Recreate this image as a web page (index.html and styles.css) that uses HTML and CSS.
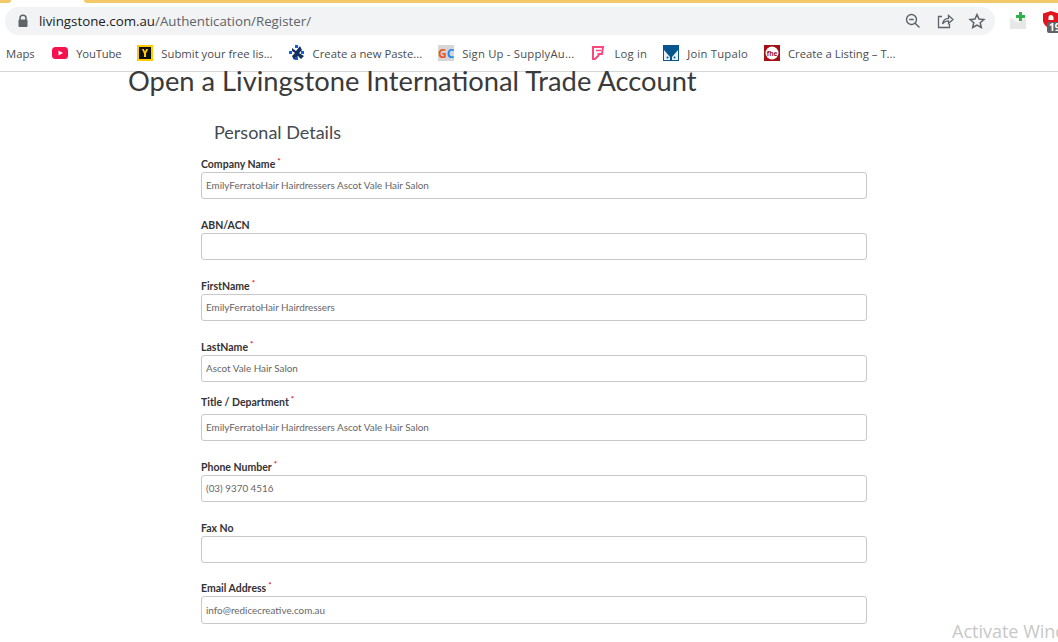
FILE: index.html
```html
<!DOCTYPE html>
<html lang="en">
<head>
<meta charset="utf-8">
<title>Open a Livingstone International Trade Account</title>
<link rel="stylesheet" href="styles.css">
</head>
<body>
<header class="chrome">
  <div class="tabstrip"><div class="tabstub"></div><div class="tabgap"></div><div class="tabfill"></div></div>
  <div class="toolbar">
    <div class="omnibox">
      <svg class="lock" width="12" height="14" viewBox="0 0 12 14"><path d="M3 6V4.200a3 3 0 0 1 6 0V6" fill="none" stroke="#5f6368" stroke-width="1.500"/><rect x="1.500" y="5.500" width="9" height="7.500" rx="1" fill="#5f6368"/></svg>
      <div class="url"><span class="host">livingstone.com.au</span>/Authentication/Register/</div>
      <svg class="omni-icon" width="18" height="18" viewBox="0 0 18 18" fill="none" stroke="#5f6368" stroke-width="1.400"><circle cx="7.500" cy="7.500" r="5"/><path d="M11.200 11.200 15.500 15.500M5.200 7.500h4.600"/></svg>
      <svg class="omni-icon" width="18" height="18" viewBox="0 0 18 18" fill="none" stroke="#5f6368" stroke-width="1.300"><path d="M6 4.500H2.500v11h11V12"/><path d="M6.500 12c.6-3.500 3-5.600 6-5.600V3.500L17 7.500l-4.500 4V8.800c-2.500 0-4.500.8-6 3.200z"/></svg>
      <svg class="omni-icon" width="18" height="18" viewBox="0 0 18 18" fill="none" stroke="#5f6368" stroke-width="1.500"><path d="M9 2.500l2 4.500 4.900.5-3.700 3.200 1.100 4.800L9 13l-4.300 2.500 1.100-4.800L2.100 7.500 7 7z"/></svg>
    </div>
    <div class="extensions">
      <svg width="18" height="18" viewBox="0 0 18 18"><rect x="0" y="6" width="16" height="11" fill="#e6e8e7"/><path d="M0 6h16l-8 5z" fill="#f5f6f5"/><path d="M9 0h3v3h3v3h-3v3H9V6H6V3h3z" fill="#2fb24a"/></svg>
      <div class="shield-wrap">
        <svg width="18" height="18" viewBox="0 0 18 18"><path d="M1 2.500 9 0l8 2.500v7c0 4-4 7-8 8.500-4-1.500-8-4.500-8-8.500z" fill="#e0161e"/><path d="M6.500 9V6.500a2.500 2.500 0 0 1 5 0V9z" fill="#fff"/></svg>
        <span class="badge">19</span>
      </div>
    </div>
  </div>
  <nav class="bookmarks">
    <span class="bm bm-maps">Maps</span>
    <span class="bm bm-narrow"><svg width="16" height="16" viewBox="0 0 16 16"><rect y="2" width="16" height="12" rx="3.500" fill="#f6114f"/><path d="M6.500 5.500 11 8l-4.500 2.500z" fill="#fff"/></svg>YouTube</span>
    <span class="bm"><svg width="16" height="16" viewBox="0 0 16 16"><rect width="16" height="16" fill="#fc0"/><rect x="2" y="2" width="12" height="12" fill="#111"/><path d="M4.800 4h2l1.200 2.500L9.200 4h2L9 8.500V12H7V8.500z" fill="#fc0"/></svg>Submit your free lis...</span>
    <span class="bm"><svg width="16" height="16" viewBox="0 0 16 16"><path d="M3 3l4 3 4-5 2 4-3 3 5 3-3 3-3-3-4 4-2-4 3-3-3-2z" fill="#16305f"/><rect x="0" y="6" width="3" height="3" fill="#0c62e0"/><rect x="6" y="0" width="3" height="3" fill="#0c62e0"/><rect x="12" y="6" width="3" height="3" fill="#0c62e0"/><rect x="6" y="12" width="3" height="3" fill="#0c62e0"/></svg>Create a new Paste...</span>
    <span class="bm bm-wide"><svg width="16" height="16" viewBox="0 0 16 16"><rect width="16" height="16" fill="#d6d6d6"/><text class="gc-text" x="0" y="13"><tspan fill="#f0541e">G</tspan><tspan fill="#1a8cf0">C</tspan></text></svg>Sign Up - SupplyAu...</span>
    <span class="bm bm-wide"><svg width="16" height="16" viewBox="0 0 16 16" fill="none" stroke="#f9487d" stroke-width="2"><path d="M3 2h10l-1 7H8.500v1.500L5 14H3z"/><path d="M6 5.500h5" stroke-width="1.500"/></svg>Log in</span>
    <span class="bm bm-wide"><svg width="16" height="16" viewBox="0 0 16 16"><rect width="16" height="16" fill="#05568f"/><path d="M1 5 7 12v3H1zM15 5 9 12v3h6z" fill="#e8f0f6"/><circle cx="4.500" cy="12.500" r="1" fill="#05568f"/><circle cx="11.500" cy="12.500" r="1" fill="#05568f"/></svg>Join Tupalo</span>
    <span class="bm"><svg width="16" height="16" viewBox="0 0 16 16"><rect width="16" height="16" fill="#a50e12"/><circle cx="8" cy="8" r="6.500" fill="#fff"/><text class="fhe-text" x="8" y="10.500">fhe</text></svg>Create a Listing – T...</span>
  </nav>
</header>
<main class="page">
  <h1 class="title">Open a Livingstone International Trade Account</h1>
  <form class="form">
    <h2 class="section">Personal Details</h2>
    <div class="field"><label class="label">Company Name<sup class="req">*</sup></label><div class="input">EmilyFerratoHair Hairdressers Ascot Vale Hair Salon</div></div>
    <div class="field"><label class="label">ABN/ACN</label><div class="input"></div></div>
    <div class="field"><label class="label">FirstName<sup class="req">*</sup></label><div class="input">EmilyFerratoHair Hairdressers</div></div>
    <div class="field field-tight"><label class="label">LastName<sup class="req">*</sup></label><div class="input">Ascot Vale Hair Salon</div></div>
    <div class="field"><label class="label label-tall">Title / Department<sup class="req">*</sup></label><div class="input">EmilyFerratoHair Hairdressers Ascot Vale Hair Salon</div></div>
    <div class="field"><label class="label">Phone Number<sup class="req">*</sup></label><div class="input">(03) 9370 4516</div></div>
    <div class="field field-snug"><label class="label">Fax No</label><div class="input"></div></div>
    <div class="field"><label class="label">Email Address<sup class="req">*</sup></label><div class="input input-tall">info@redicecreative.com.au</div></div>
  </form>
</main>
<div class="watermark">Activate Windows</div>
</body>
</html>
```
FILE: styles.css
```css
* { box-sizing: border-box; }
html, body { margin: 0; height: 642px; overflow: hidden; background: #fff; }
body { font-family: Lato, "Noto Sans", sans-serif; color: #333; position: relative; width: 1058px; }
.chrome { height: 72px; border-bottom: 1px solid #d5d6d8; background: #fff; }
.tabstrip { display: flex; height: 3px; }
.tabstub { width: 11px; background: #f3c869; border-bottom-right-radius: 3px; }
.tabgap { width: 73px; background: #fff; }
.tabfill { flex: 1; background: #f3c869; border-bottom-left-radius: 3px; }
.toolbar { display: flex; align-items: center; height: 33px; padding: 4px 0 1px 5px; }
.omnibox { width: 990px; height: 28px; background: #f1f3f4; border-radius: 14px; display: flex; align-items: center; padding: 0 9px 0 12px; gap: 14px; flex: none; }
.lock { flex: none; }
.url { flex: 1; font: 13.300px "Open Sans", sans-serif; color: #5f6368; margin-left: -4px; }
.host { color: #202124; }
.omni-icon { flex: none; }
.extensions { display: flex; gap: 14px; margin-left: 15px; flex: none; align-items: center; }
.shield-wrap { position: relative; width: 18px; height: 18px; margin-top: -3px; }
.badge { position: absolute; left: 5px; top: 11px; background: #5f6368; color: #fff; font: 700 10px/11px "Open Sans", sans-serif; padding: 0 2px; border-radius: 2px; }
.bookmarks { display: flex; align-items: center; height: 34px; padding-left: 6px; font: 11.300px "Open Sans", sans-serif; color: #4a4d52; gap: 16px; }
.bm { display: flex; align-items: center; gap: 8px; white-space: nowrap; }
.bm-maps { margin-right: 1.500px; }
.bm-wide { letter-spacing: .2px; }
.bm-narrow { letter-spacing: -.2px; }
.gc-text { font: 700 12px "Open Sans", sans-serif; letter-spacing: 0; }
.fhe-text { font: 700 6.500px "Open Sans", sans-serif; fill: #a50e12; text-anchor: middle; }
.page { padding-left: 128px; }
.title { margin: -1px 0 1px; font-size: 27.300px; line-height: 20px; font-weight: 400; color: #3a3a3a; }
.form { margin-left: 73px; width: 666px; }
.section { margin: 0 0 0 13px; padding-top: 28px; height: 65px; font-size: 18px; font-weight: 400; line-height: 24px; color: #444a50; }
.field { margin-bottom: 19px; }
.field-tight { margin-bottom: 13px; }
.field-snug { margin-bottom: 18px; }
.label { display: block; height: 15px; font-size: 10.500px; font-weight: 700; line-height: 15px; color: #333; }
.label-tall { height: 19px; }
.req { color: #e8112d; font-size: 8px; line-height: 0; margin-left: 2px; }
.input { height: 27px; border: 1px solid #c9c9c9; border-radius: 3px; padding: 0 4px; font-size: 9.870px; line-height: 25px; color: #666; }
.input-tall { height: 28px; line-height: 26px; }
.watermark { position: absolute; left: 952px; top: 619px; font: 18px "Open Sans", sans-serif; color: #c8c8c8; white-space: nowrap; }
```
